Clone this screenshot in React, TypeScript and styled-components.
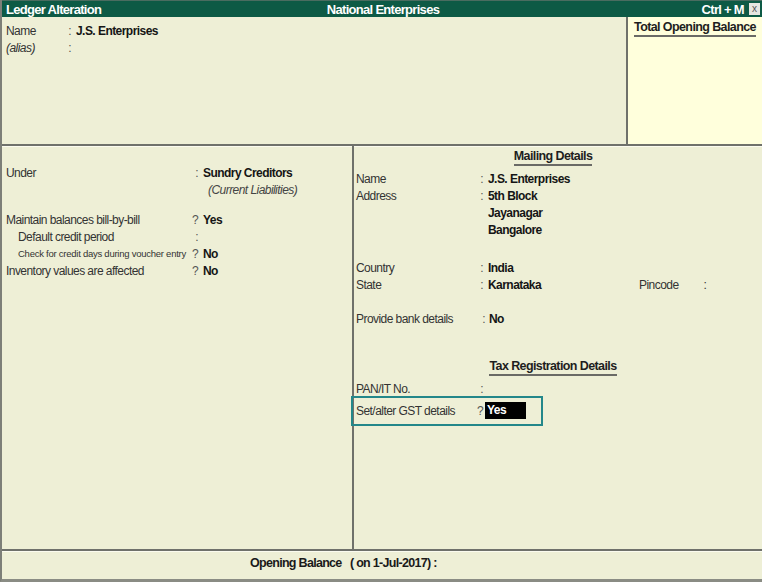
import React from 'react';
import styled, { createGlobalStyle } from 'styled-components';

const Global = createGlobalStyle`
  html, body {
    margin: 0;
    padding: 0;
    background: #eeefd6;
  }
  body {
    font-family: "Liberation Sans", Arial, sans-serif;
    font-size: 12px;
    letter-spacing: -0.55px;
    color: #2a2a2a;
  }
`;

const Frame = styled.div`
  width: 762px;
  height: 582px;
  box-sizing: border-box;
  display: flex;
  flex-direction: column;
  background: #eeefd6;
  border-left: 2px solid #7d7f78;
  border-bottom: 3px solid #8a8c84;
  overflow: hidden;
`;

const TitleBar = styled.div`
  height: 16px;
  flex: none;
  display: grid;
  grid-template-columns: 1fr auto 1fr;
  align-items: center;
  background: #0d5a45;
  color: #fff;
  font-weight: bold;
  font-size: 13px;
  letter-spacing: -0.7px;
  padding: 0 2px 0 6px;
  margin-left: -2px;
  border-top: 1px solid #4a6c60;
  white-space: nowrap;
`;

const TitleRight = styled.div`
  display: flex;
  justify-content: flex-end;
  align-items: center;
  gap: 5px;
`;

const CloseBox = styled.span`
  width: 11px;
  height: 12px;
  display: inline-flex;
  align-items: center;
  justify-content: center;
  background: #e6e6e0;
  color: #555;
  font-size: 10px;
  font-weight: normal;
  letter-spacing: 0;
  line-height: 1;
`;

const TopSection = styled.div`
  height: 127px;
  flex: none;
  display: flex;
  border-bottom: 2px solid #6f716b;
  box-shadow: 0 1px 0 #fbfbef;
`;

const NameArea = styled.div`
  flex: 1;
  padding: 5px 0 0 4px;
`;

const BalanceBox = styled.div`
  width: 134px;
  background: #ffffdc;
  border-left: 2px solid #6f716b;
  display: flex;
  flex-direction: column;
  align-items: center;
  padding-top: 3px;
`;

const Heading = styled.span`
  font-weight: bold;
  font-size: 12.5px;
  letter-spacing: -0.6px;
  color: #1e1e1e;
  line-height: 15px;
  border-bottom: 2px solid #6a6a66;
  white-space: nowrap;
`;

const Row = styled.div<{ $label: number; $sep?: number }>`
  display: grid;
  grid-template-columns: ${(p) => p.$label}px ${(p) => p.$sep ?? 8}px auto;
  align-items: center;
  height: 17px;
  white-space: nowrap;
`;

const Label = styled.span<{ $indent?: number; $small?: boolean; $italic?: boolean }>`
  padding-left: ${(p) => p.$indent ?? 0}px;
  font-size: ${(p) => (p.$small ? '9.5px' : '12px')};
  letter-spacing: ${(p) => (p.$small ? '-0.25px' : '-0.55px')};
  font-style: ${(p) => (p.$italic ? 'italic' : 'normal')};
  color: #333;
`;

const Sep = styled.span`
  text-align: right;
  color: #555;
  padding-right: 1px;
`;

const Value = styled.span<{ $indent?: number }>`
  padding-left: ${(p) => (p.$indent ?? 4)}px;
  font-weight: bold;
  font-size: 12px;
  color: #151515;
`;

const Note = styled.span`
  padding-left: 9px;
  font-style: italic;
  color: #444;
`;

const Middle = styled.div`
  flex: 1;
  display: grid;
  grid-template-columns: 352px 1fr;
`;

const LeftPanel = styled.div`
  border-right: 2px solid #6f716b;
  padding: 18px 0 0 4px;
`;

const RightPanel = styled.div`
  padding: 3px 0 0 2px;
`;

const Centered = styled.div`
  display: flex;
  justify-content: center;
  padding-right: 12px;
  height: 17px;
  align-items: center;
`;

const Gap = styled.div<{ $h: number }>`
  height: ${(p) => p.$h}px;
`;

const Highlight = styled.div`
  box-sizing: border-box;
  margin-left: -5px;
  margin-top: -1px;
  width: 192px;
  height: 30px;
  border: 2px solid #23878a;
  padding: 0 0 1px 3px;
  display: flex;
  align-items: center;
`;

const Selected = styled.span`
  display: inline-block;
  margin-left: 1px;
  width: 39px;
  height: 17px;
  line-height: 17px;
  padding-left: 2px;
  background: #000;
  color: #fff;
  font-weight: bold;
  font-size: 12px;
`;

const Karnataka = styled.span`
  display: inline-block;
  width: 151px;
`;

const Pincode = styled.span`
  display: inline-flex;
  gap: 25px;
  color: #333;
  font-weight: normal;
`;

const Footer = styled.div`
  height: 30px;
  flex: none;
  box-sizing: border-box;
  border-top: 2px solid #6f716b;
  box-shadow: inset 0 1px 0 #fbfbef;
  padding: 5px 0 0 248px;
  line-height: 15px;
  font-weight: bold;
  font-size: 12.5px;
  letter-spacing: -0.7px;
  color: #1a1a1a;
  white-space: pre;
`;

export default function App() {
  return (
    <>
      <Global />
      <Frame>
        <TitleBar>
          <span>Ledger Alteration</span>
          <span>National Enterprises</span>
          <TitleRight>
            <span>Ctrl + M</span>
            <CloseBox>x</CloseBox>
          </TitleRight>
        </TitleBar>

        <TopSection>
          <NameArea>
            <Row $label={58}>
              <Label>Name</Label>
              <Sep>:</Sep>
              <Value>J.S. Enterprises</Value>
            </Row>
            <Row $label={58}>
              <Label $italic>(alias)</Label>
              <Sep>:</Sep>
              <span />
            </Row>
          </NameArea>
          <BalanceBox>
            <Heading>Total Opening Balance</Heading>
          </BalanceBox>
        </TopSection>

        <Middle>
          <LeftPanel>
            <Row $label={184} $sep={9}>
              <Label>Under</Label>
              <Sep>:</Sep>
              <Value>Sundry Creditors</Value>
            </Row>
            <Row $label={184} $sep={9}>
              <span />
              <span />
              <Note>(Current Liabilities)</Note>
            </Row>
            <Gap $h={13} />
            <Row $label={184} $sep={9}>
              <Label>Maintain balances bill-by-bill</Label>
              <Sep>?</Sep>
              <Value>Yes</Value>
            </Row>
            <Row $label={184} $sep={9}>
              <Label $indent={12}>Default credit period</Label>
              <Sep>:</Sep>
              <span />
            </Row>
            <Row $label={184} $sep={9}>
              <Label $indent={12} $small>Check for credit days during voucher entry</Label>
              <Sep>?</Sep>
              <Value>No</Value>
            </Row>
            <Row $label={184} $sep={9}>
              <Label>Inventory values are affected</Label>
              <Sep>?</Sep>
              <Value>No</Value>
            </Row>
          </LeftPanel>

          <RightPanel>
            <Centered>
              <Heading>Mailing Details</Heading>
            </Centered>
            <Gap $h={4} />
            <Row $label={120}>
              <Label>Name</Label>
              <Sep>:</Sep>
              <Value>J.S. Enterprises</Value>
            </Row>
            <Row $label={120}>
              <Label>Address</Label>
              <Sep>:</Sep>
              <Value>5th Block</Value>
            </Row>
            <Row $label={120}>
              <span />
              <span />
              <Value>Jayanagar</Value>
            </Row>
            <Row $label={120}>
              <span />
              <span />
              <Value>Bangalore</Value>
            </Row>
            <Gap $h={21} />
            <Row $label={120}>
              <Label>Country</Label>
              <Sep>:</Sep>
              <Value>India</Value>
            </Row>
            <Row $label={120}>
              <Label>State</Label>
              <Sep>:</Sep>
              <Value>
                <Karnataka>Karnataka</Karnataka>
                <Pincode>
                  <span>Pincode</span>
                  <span>:</span>
                </Pincode>
              </Value>
            </Row>
            <Gap $h={17} />
            <Row $label={122}>
              <Label>Provide bank details</Label>
              <Sep>:</Sep>
              <Value $indent={3}>No</Value>
            </Row>
            <Gap $h={32} />
            <Centered>
              <Heading>Tax Registration Details</Heading>
            </Centered>
            <Gap $h={4} />
            <Row $label={120}>
              <Label>PAN/IT No.</Label>
              <Sep>:</Sep>
              <span />
            </Row>
            <Highlight>
              <Row $label={120}>
                <Label>Set/alter GST details</Label>
                <Sep>?</Sep>
                <Selected>Yes</Selected>
              </Row>
            </Highlight>
          </RightPanel>
        </Middle>

        <Footer>Opening Balance   ( on 1-Jul-2017) :</Footer>
      </Frame>
    </>
  );
}
